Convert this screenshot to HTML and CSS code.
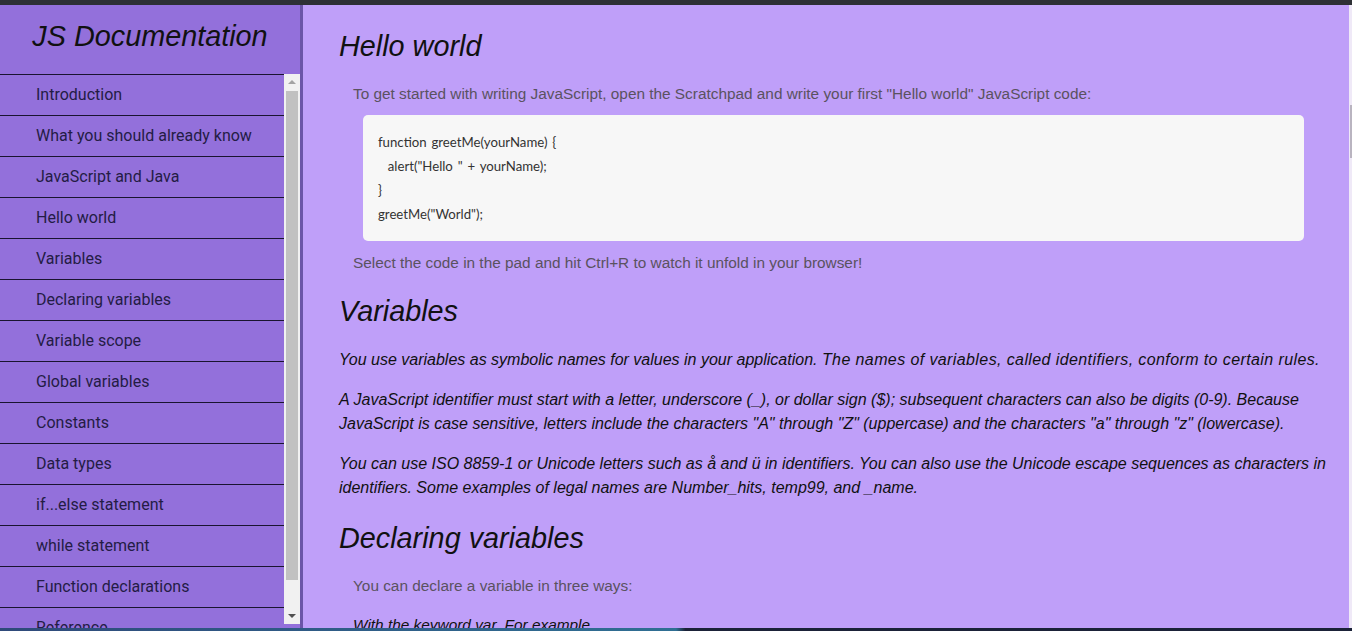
FILE: index.html
```html
<!DOCTYPE html>
<html lang="en">
<head>
<meta charset="utf-8">
<title>JS Documentation</title>
<link rel="stylesheet" href="styles.css">
</head>
<body>
<div class="topbar"></div>
<div class="layout">
  <nav class="sidebar" id="navbar">
    <header class="sidebar-head">JS Documentation</header>
    <div class="nav-body">
      <ul class="nav-list">
        <li><a class="nav-link" href="#Introduction">Introduction</a></li>
        <li><a class="nav-link" href="#What_you_should_already_know">What you should already know</a></li>
        <li><a class="nav-link" href="#JavaScript_and_Java">JavaScript and Java</a></li>
        <li><a class="nav-link" href="#Hello_world">Hello world</a></li>
        <li><a class="nav-link" href="#Variables">Variables</a></li>
        <li><a class="nav-link" href="#Declaring_variables">Declaring variables</a></li>
        <li><a class="nav-link" href="#Variable_scope">Variable scope</a></li>
        <li><a class="nav-link" href="#Global_variables">Global variables</a></li>
        <li><a class="nav-link" href="#Constants">Constants</a></li>
        <li><a class="nav-link" href="#Data_types">Data types</a></li>
        <li><a class="nav-link" href="#if...else_statement">if...else statement</a></li>
        <li><a class="nav-link" href="#while_statement">while statement</a></li>
        <li><a class="nav-link" href="#Function_declarations">Function declarations</a></li>
        <li><a class="nav-link" href="#Reference">Reference</a></li>
      </ul>
      <div class="nav-scroll">
        <div class="arrow arrow-up"></div>
        <div class="track"><div class="thumb"></div></div>
        <div class="arrow arrow-down"></div>
      </div>
    </div>
  </nav>
  <main class="main" id="main-doc">
    <section class="main-section" id="Hello_world">
      <h2 class="sec-title">Hello world</h2>
      <p class="note">To get started with writing JavaScript, open the Scratchpad and write your first "Hello world" JavaScript code:</p>
      <pre class="code"><code>function greetMe(yourName) {
  alert("Hello " + yourName);
}
greetMe("World");</code></pre>
      <p class="note">Select the code in the pad and hit Ctrl+R to watch it unfold in your browser!</p>
    </section>
    <section class="main-section" id="Variables">
      <h2 class="sec-title">Variables</h2>
      <p class="body-it">You use variables as symbolic names for values in your application. <span class="wide">The names of variables, called identifiers, conform to certain rules.</span></p>
      <p class="body-it">A JavaScript identifier must start with a letter, underscore (_), or dollar sign ($); subsequent characters can also be digits (0-9). Because JavaScript is case sensitive, letters include the characters "A" through "Z" (uppercase) and the characters "a" through "z" (lowercase).</p>
      <p class="body-it">You can use ISO 8859-1 or Unicode letters such as å and ü in identifiers. You can also use the Unicode escape sequences as characters in identifiers. Some examples of legal names are Number_hits, temp99, and _name.</p>
    </section>
    <section class="main-section" id="Declaring_variables">
      <h2 class="sec-title">Declaring variables</h2>
      <p class="note">You can declare a variable in three ways:</p>
      <p class="body-it indent">With the keyword var. For example.</p>
    </section>
  </main>
  <div class="page-scroll"><div class="page-thumb"></div></div>
</div>
<div class="bottombar"></div>
</body>
</html>
```
FILE: styles.css
```css
html, body {
  margin: 0;
  padding: 0;
  height: 100%;
  overflow: hidden;
}
body {
  display: flex;
  flex-direction: column;
  background: #bf9ff9;
  font-family: "Liberation Sans", Arial, sans-serif;
}
.topbar {
  height: 5px;
  flex: none;
  background: #2e3035;
}
.bottombar {
  height: 3px;
  flex: none;
  background: linear-gradient(to right, #2f4a7a 0, #2f6f93 50%, #1b2238 50.7%, #1b2238 100%);
}
.layout {
  flex: 1;
  display: flex;
  min-height: 0;
}
.sidebar {
  width: 300px;
  flex: none;
  background: #9370db;
  border-right: 3px solid #6b55a8;
  display: flex;
  flex-direction: column;
  min-height: 0;
}
.sidebar-head {
  font-style: italic;
  font-size: 28.8px;
  line-height: 33px;
  text-align: center;
  color: #111;
  padding: 15px 0 21px;
}
.nav-body {
  flex: 1;
  display: flex;
  min-height: 0;
  overflow: hidden;
}
.nav-list {
  list-style: none;
  margin: 0;
  padding: 0;
  width: 284px;
  flex: none;
  overflow: hidden;
}
.nav-list li {
  border-top: 1px solid #1a1430;
}
.nav-link {
  display: block;
  height: 40px;
  line-height: 40px;
  padding-left: 36px;
  font-family: Roboto, "Noto Sans", sans-serif;
  font-size: 16px;
  color: #241c45;
  text-decoration: none;
}
.nav-scroll {
  width: 16px;
  flex: none;
  background: #f1f1f1;
  display: flex;
  flex-direction: column;
  height: 550px;
}
.arrow {
  height: 16px;
  flex: none;
  display: flex;
  align-items: center;
  justify-content: center;
}
.arrow::before {
  content: "";
  width: 0;
  height: 0;
  border-left: 4px solid transparent;
  border-right: 4px solid transparent;
}
.arrow-up::before {
  border-bottom: 4px solid #a3a3a3;
}
.arrow-down::before {
  border-top: 4px solid #505050;
}
.track {
  flex: 1;
  display: flex;
  flex-direction: column;
  padding: 1px 2px 28px;
}
.thumb {
  flex: 1;
  background: #c1c1c1;
}
.main {
  flex: 1;
  min-width: 0;
  padding: 24px 19px 0 36px;
  overflow: hidden;
  color: #111;
}
.main-section {
  margin-bottom: 21px;
}
.sec-title {
  margin: 0 0 21px;
  font-size: 28.8px;
  line-height: 34px;
  font-style: italic;
  font-weight: normal;
  color: #111;
}
.note {
  margin: 0 0 0 14px;
  font-size: 15.36px;
  line-height: 20px;
  color: #5a5260;
}
.code {
  margin: 11px 26px 12px 24px;
  padding: 15px 15px 15px;
  background: #f7f7f7;
  border-radius: 5px;
  font-family: Lato, "Open Sans", sans-serif;
  font-size: 13.2px;
  word-spacing: 1.5px;
  line-height: 24px;
  color: #333;
  white-space: pre;
}
.code code {
  font-family: inherit;
}
.body-it {
  margin: 0 0 16px;
  font-size: 16px;
  line-height: 24px;
  font-style: italic;
  color: #111;
}
.body-it:last-child {
  margin-bottom: 0;
}
.wide {
  letter-spacing: 0.4px;
}
#Variables .sec-title {
  margin-bottom: 20px;
}
.indent {
  margin-left: 14px;
  margin-top: 17px;
  font-size: 15.4px;
}
.page-scroll {
  width: 3px;
  flex: none;
  background: #efe9f7;
  padding-top: 100px;
}
.page-thumb {
  height: 53px;
  width: 2px;
  margin-left: 1px;
  background: #b9b4c0;
}
```
